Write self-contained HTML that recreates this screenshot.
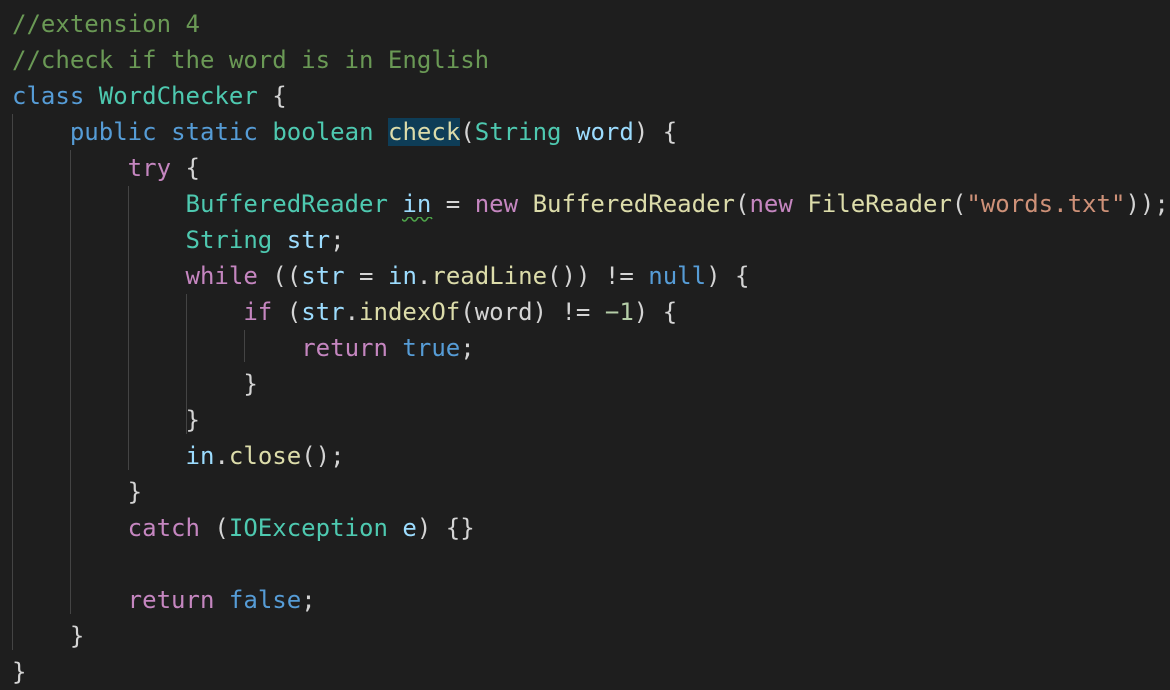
<!DOCTYPE html>
<html><head><style>
html,body{margin:0;padding:0;background:#1e1e1e;width:1170px;height:690px;overflow:hidden}
.c{position:absolute;left:12px;top:6px;font-family:"DejaVu Sans Mono","Liberation Mono",monospace;font-size:24.03px;line-height:36px;color:#d4d4d4;white-space:pre}
.cm{color:#6a9955}.k{color:#569cd6}.t{color:#4ec9b0}.p{color:#c586c0}.f{color:#dcdcaa}.v{color:#9cdcfe}.s{color:#ce9178}.n{color:#b5cea8}
.hl{background:#0e3d57}
.g{position:absolute;width:1px;background:#444}
</style></head><body>
<div class="g" style="left:12px;top:114px;height:536px"></div>
<div class="g" style="left:70px;top:150px;height:464px"></div>
<div class="g" style="left:128px;top:186px;height:284px"></div>
<div class="g" style="left:186px;top:294px;height:140px"></div>
<div class="g" style="left:244px;top:330px;height:32px"></div>
<svg style="position:absolute;left:402px;top:217px" width="32" height="8"><path d="M0 2 Q2.5 6 5 2 T10 2 T15 2 T20 2 T25 2 T30 2" stroke="#4ea64a" stroke-width="1.6" fill="none"/></svg>
<div class="c"><span class="cm">//extension 4</span>
<span class="cm">//check if the word is in English</span>
<span class="k">class</span> <span class="t">WordChecker</span> {
    <span class="k">public</span> <span class="k">static</span> <span class="t">boolean</span> <span class="f hl">check</span>(<span class="t">String</span> <span class="v">word</span>) {
        <span class="p">try</span> {
            <span class="t">BufferedReader</span> <span class="v">in</span> = <span class="p">new</span> <span class="f">BufferedReader</span>(<span class="p">new</span> <span class="f">FileReader</span>(<span class="s">"words.txt"</span>));
            <span class="t">String</span> <span class="v">str</span>;
            <span class="p">while</span> ((<span class="v">str</span> = <span class="v">in</span>.<span class="f">readLine</span>()) != <span class="k">null</span>) {
                <span class="p">if</span> (<span class="v">str</span>.<span class="f">indexOf</span>(word) != <span class="n">−1</span>) {
                    <span class="p">return</span> <span class="k">true</span>;
                }
            }
            <span class="v">in</span>.<span class="f">close</span>();
        }
        <span class="p">catch</span> (<span class="t">IOException</span> <span class="v">e</span>) {}

        <span class="p">return</span> <span class="k">false</span>;
    }
}</div>
</body></html>
